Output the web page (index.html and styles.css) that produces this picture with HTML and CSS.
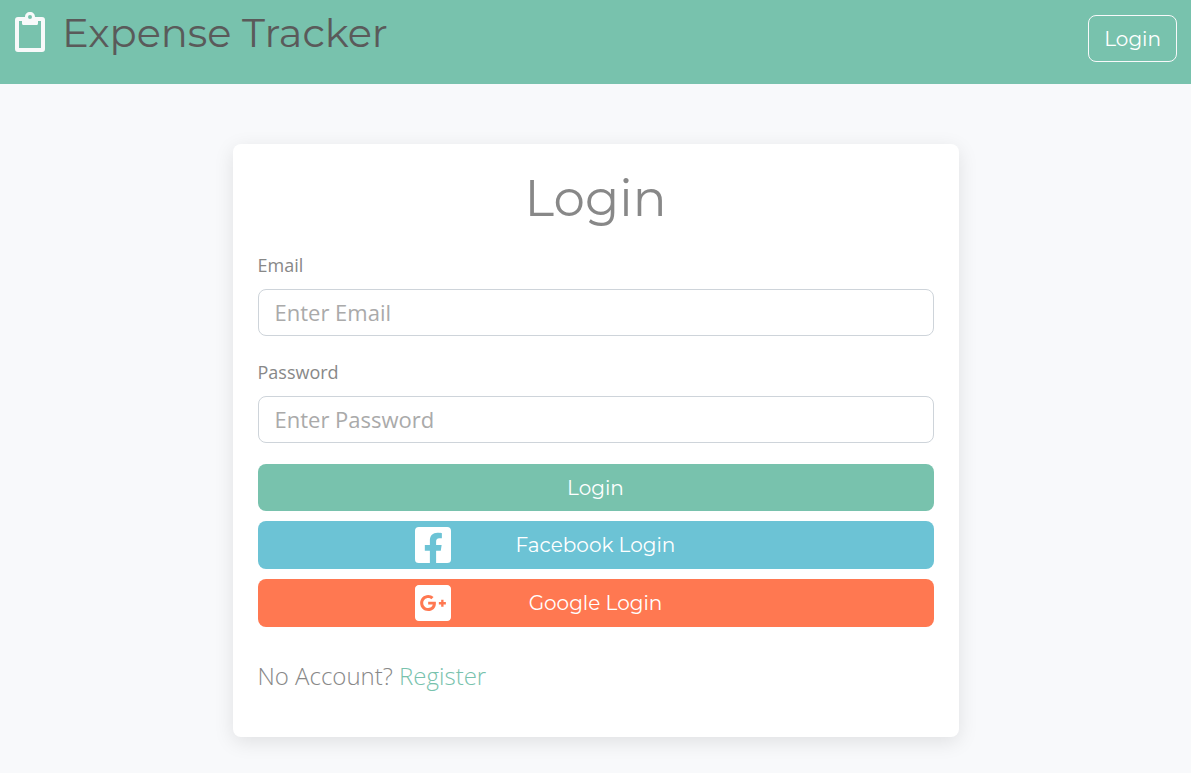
FILE: index.html
```html
<!DOCTYPE html>
<html lang="en">
<head>
<meta charset="utf-8">
<meta name="viewport" content="width=device-width, initial-scale=1">
<title>Expense Tracker</title>
<link rel="stylesheet" href="styles.css">
</head>
<body>
<header class="navbar">
  <a class="brand" href="#">
    <svg class="brand-icon" viewBox="0 0 32 40" aria-hidden="true">
      <path fill="currentColor" fill-rule="evenodd" d="M4 5H11C11 2 13 0 16 0S21 2 21 5H28C30 5 31 6 31 8V37C31 39 30 40 28 40H4C2 40 1 39 1 37V8C1 6 2 5 4 5ZM5 9V36H27V9H24V11.500Q24 13 22.500 13H9.500Q8 13 8 11.500V9ZM16 3A2 2 0 1 0 16 7A2 2 0 1 0 16 3Z"/>
    </svg>
    <span>Expense Tracker</span>
  </a>
  <button class="btn btn-outline" type="button">Login</button>
</header>
<main class="page">
  <section class="card">
    <h1 class="title">Login</h1>
    <form class="form">
      <div class="field">
        <label for="email">Email</label>
        <input id="email" type="email" placeholder="Enter Email">
      </div>
      <div class="field">
        <label for="password">Password</label>
        <input id="password" type="password" placeholder="Enter Password">
      </div>
      <div class="actions">
        <button class="btn btn-primary" type="submit">Login</button>
        <button class="btn btn-social btn-facebook" type="button">
          <svg class="social-icon" viewBox="0 32 448 448" aria-hidden="true"><path fill="currentColor" d="M400 32H48A48 48 0 0 0 0 80v352a48 48 0 0 0 48 48h137.250V327.690h-63V256h63v-54.640c0-62.150 37-96.480 93.670-96.480 27.140 0 55.520 4.840 55.520 4.840v61h-31.270c-30.810 0-40.420 19.120-40.420 38.730V256h68.780l-11 71.690h-57.780V480H400a48 48 0 0 0 48-48V80a48 48 0 0 0-48-48z"/></svg>
          <span>Facebook Login</span>
        </button>
        <button class="btn btn-social btn-google" type="button">
          <svg class="social-icon" viewBox="0 32 448 448" aria-hidden="true"><path fill="currentColor" d="M400 32H48C21.500 32 0 53.500 0 80v352c0 26.500 21.500 48 48 48h352c26.500 0 48-21.500 48-48V80c0-26.500-21.500-48-48-48zM164 356c-55.300 0-100-44.700-100-100s44.700-100 100-100c27 0 49.500 9.800 67 26.200l-27.100 26.100c-7.400-7.100-20.300-15.400-39.800-15.400-34.100 0-61.900 28.200-61.900 63.200 0 34.900 27.800 63.200 61.900 63.200 39.600 0 54.400-28.500 56.800-43.100H164v-34.400h94.400c1 5 1.600 10.100 1.600 16.600 0 57.100-38.300 97.600-96 97.600zm220-81.800h-29v29h-29.200v-29h-29V245h29v-29H355v29h29v29.200z"/></svg>
          <span>Google Login</span>
        </button>
      </div>
    </form>
    <p class="register">No Account? <a href="#">Register</a></p>
  </section>
</main>
</body>
</html>
```
FILE: styles.css
```css
* { box-sizing: border-box; }

body {
  margin: 0;
  min-height: 100vh;
  background: #f8f9fb;
  color: #888;
  font-family: "Segoe UI", "Open Sans", "Noto Sans", sans-serif;
}

.navbar {
  display: flex;
  align-items: flex-start;
  justify-content: space-between;
  min-height: 84px;
  padding: 8px 14px;
  background: #78c2ad;
}

.brand {
  display: flex;
  align-items: flex-start;
  gap: 16px;
  color: #5a5a5a;
  font: 400 40px/50px Montserrat, Inter, sans-serif;
  text-decoration: none;
}

.brand-icon {
  width: 32px;
  height: 40px;
  margin-top: 4px;
  color: #f8f9fa;
}

.btn {
  min-height: 47px;
  padding: 0 15px;
  border: 1px solid transparent;
  border-radius: 8px;
  color: #fff;
  font: 400 20px/30px Montserrat, Inter, sans-serif;
  cursor: pointer;
}

.btn-outline {
  margin-top: 7px;
  border-color: #f8f9fa;
  background: transparent;
}

.page {
  display: flex;
  justify-content: center;
  padding: 60px 16px 35px;
}

.card {
  width: 100%;
  max-width: 726px;
  padding: 25px 25px 43px;
  border-radius: 8px;
  background: #fff;
  box-shadow: 0 5px 20px rgba(0, 0, 0, 0.1);
}

.title {
  margin: 0 0 20px;
  font: 400 50px/60px Montserrat, Inter, sans-serif;
  text-align: center;
}

.form,
.field,
.actions {
  display: flex;
  flex-direction: column;
}

.form { gap: 20px; }
.field { gap: 8px; }

.actions {
  gap: 10px;
  padding-top: 1px;
}

.field label {
  align-self: flex-start;
  font-size: 18px;
  line-height: 32px;
}

.field input {
  width: 100%;
  height: 47px;
  padding: 0 16px 2px;
  border: 1px solid #ced4da;
  border-radius: 8px;
  background: #fff;
  color: #888;
  font: 400 22px/32px "Segoe UI", "Open Sans", "Noto Sans", sans-serif;
}

.field input::placeholder {
  color: #aaa;
  opacity: 1;
}

.btn-primary { background: #78c2ad; }
.btn-facebook { background: #6cc3d5; }
.btn-google { background: #ff7851; }

.btn-social {
  display: grid;
  grid-template-columns: 2fr 3fr 2fr;
  align-items: center;
  min-height: 48px;
  padding: 0;
}

.social-icon {
  justify-self: end;
  width: 36px;
  height: 36px;
}

.register {
  margin: 31px 0 0;
  font-size: 24px;
  font-weight: 300;
  line-height: 36px;
}

.register a {
  color: #78c2ad;
  text-decoration: none;
}
```
